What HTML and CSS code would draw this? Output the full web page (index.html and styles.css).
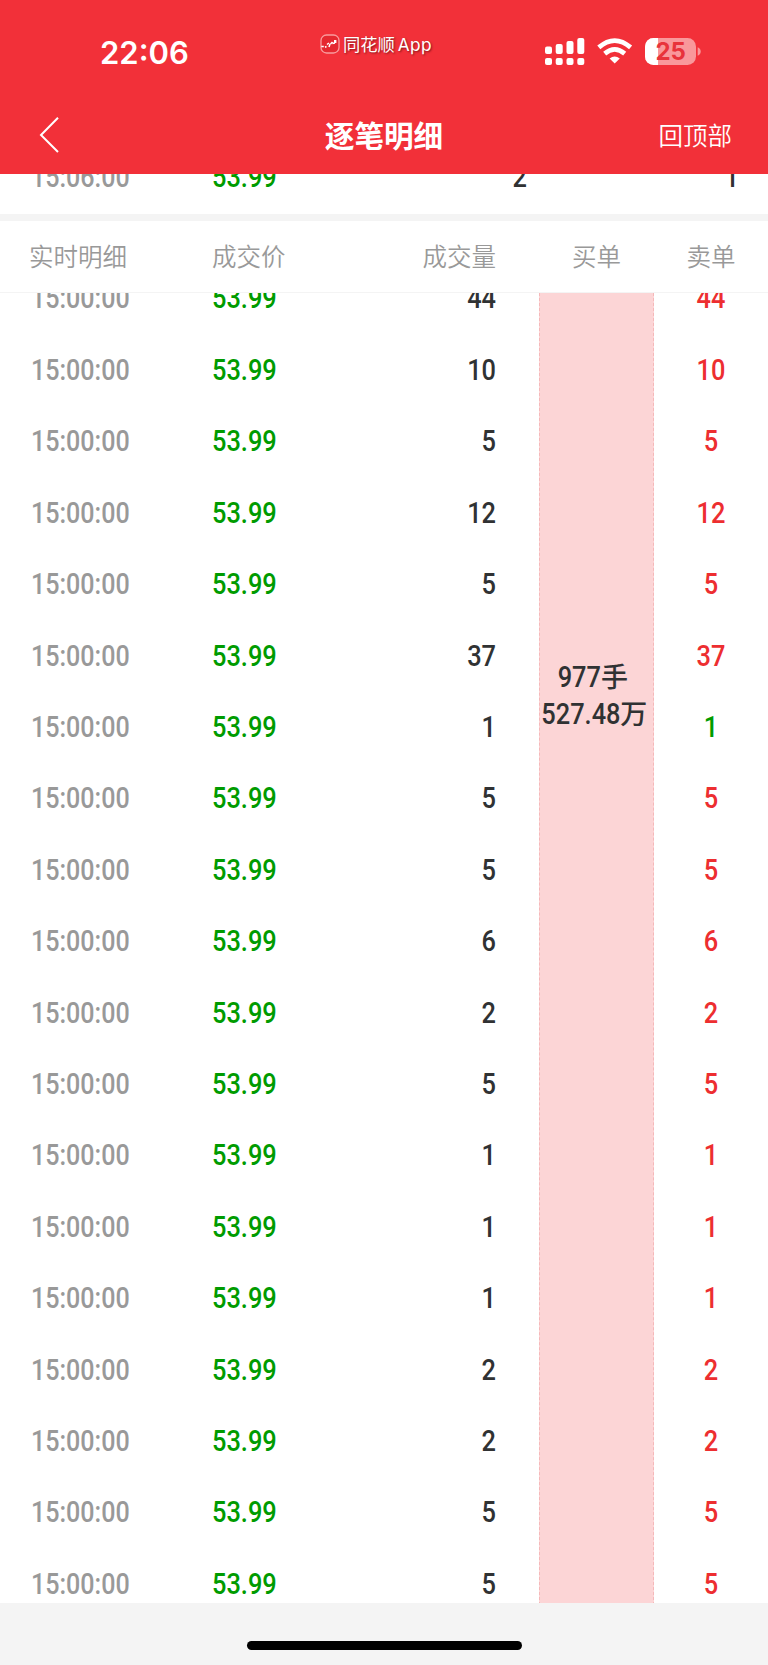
FILE: index.html
```
<!DOCTYPE html>
<html lang="zh-CN">
<head>
<meta charset="utf-8">
<title>逐笔明细</title>
<link rel="stylesheet" href="styles.css">
</head>
<body>
<div class="screen">
  <header class="header">
    <div class="status">
      <div class="clock">22:06</div>
      <div class="app">
        <svg class="app-icon" width="20" height="20" viewBox="0 0 20 20"><rect x="1" y="1" width="18" height="18" rx="5.5" fill="#e52830" stroke="#f99b9d" stroke-width="1.3"/><path d="M1.3 12.5h2.500M5 13.200l1.500-.7M7 10.500l2-1.500M9 13l1-3M10.500 10l2-2M12.500 9.500l2.500-.5" fill="none" stroke="#fff" stroke-width="1.5"/><rect x="14" y="6" width="2.4" height="3" fill="#fff"/></svg>
        <span class="app-name">同花顺<span class="app-latin">App</span></span>
      </div>
      <div class="indicators">
        <svg width="156" height="28" viewBox="0 0 156 28">
          <g fill="#fff">
            <rect x="0" y="8.5" width="7" height="7.5" rx="2"/><rect x="10.7" y="6" width="7" height="10" rx="2"/><rect x="21.5" y="3" width="7" height="13" rx="2"/><rect x="32.3" y="0" width="7" height="16" rx="2"/>
            <rect x="0" y="20" width="7" height="7" rx="2"/><rect x="10.7" y="20" width="7" height="7" rx="2"/><rect x="21.5" y="20" width="7" height="7" rx="2"/><rect x="32.3" y="20" width="7" height="7" rx="2"/>
            <path d="M69.7 25.6L64.6 20.6Q69.7 16.6 74.8 20.6Z"/>
          </g>
          <g fill="none" stroke="#fff" stroke-width="4.7"><path d="M53.8 9.4Q69.7-4.2 85.6 9.4"/><path d="M59.7 15.6Q69.7 7.2 79.7 15.6"/></g>
          <defs><clipPath id="cell"><rect x="100" y="0" width="51" height="27" rx="8.5"/></clipPath></defs>
          <g clip-path="url(#cell)"><rect x="100" width="51" height="27" fill="#f9989b"/><rect x="100" width="13" height="27" fill="#fff"/></g>
          <path d="M152.7 9.3Q155.7 10.5 155.7 13.5Q155.7 16.5 152.7 17.8Z" fill="#f9989b"/>
          <text class="charge" x="125.7" y="22.2" text-anchor="middle">25</text>
        </svg>
      </div>
    </div>
    <nav class="nav">
      <svg class="back" width="20" height="36" viewBox="0 0 20 36"><path d="M19 .7L2 18l17 17" fill="none" stroke="#fff" stroke-width="2"/></svg>
      <h1 class="title">逐笔明细</h1>
      <span class="to-top">回顶部</span>
    </nav>
  </header>

  <section class="summary">
    <div class="summary-row"><span class="num time">15:06:00</span><span class="num price">53.99</span><span class="num end">2</span><span class="num end">1</span></div>
  </section>

  <div class="heads"><span>实时明细</span><span>成交价</span><span class="head-end">成交量</span><span class="head-mid buy-head">买单</span><span class="head-mid">卖单</span></div>

  <main class="list">
    <div class="trades">
      <div class="row"><span class="num time">15:00:00</span><span class="num price">53.99</span><span class="num end">44</span></div>
      <div class="row"><span class="num time">15:00:00</span><span class="num price">53.99</span><span class="num end">10</span></div>
      <div class="row"><span class="num time">15:00:00</span><span class="num price">53.99</span><span class="num end">5</span></div>
      <div class="row"><span class="num time">15:00:00</span><span class="num price">53.99</span><span class="num end">12</span></div>
      <div class="row"><span class="num time">15:00:00</span><span class="num price">53.99</span><span class="num end">5</span></div>
      <div class="row"><span class="num time">15:00:00</span><span class="num price">53.99</span><span class="num end">37</span></div>
      <div class="row"><span class="num time">15:00:00</span><span class="num price">53.99</span><span class="num end">1</span></div>
      <div class="row"><span class="num time">15:00:00</span><span class="num price">53.99</span><span class="num end">5</span></div>
      <div class="row"><span class="num time">15:00:00</span><span class="num price">53.99</span><span class="num end">5</span></div>
      <div class="row"><span class="num time">15:00:00</span><span class="num price">53.99</span><span class="num end">6</span></div>
      <div class="row"><span class="num time">15:00:00</span><span class="num price">53.99</span><span class="num end">2</span></div>
      <div class="row"><span class="num time">15:00:00</span><span class="num price">53.99</span><span class="num end">5</span></div>
      <div class="row"><span class="num time">15:00:00</span><span class="num price">53.99</span><span class="num end">1</span></div>
      <div class="row"><span class="num time">15:00:00</span><span class="num price">53.99</span><span class="num end">1</span></div>
      <div class="row"><span class="num time">15:00:00</span><span class="num price">53.99</span><span class="num end">1</span></div>
      <div class="row"><span class="num time">15:00:00</span><span class="num price">53.99</span><span class="num end">2</span></div>
      <div class="row"><span class="num time">15:00:00</span><span class="num price">53.99</span><span class="num end">2</span></div>
      <div class="row"><span class="num time">15:00:00</span><span class="num price">53.99</span><span class="num end">5</span></div>
      <div class="row"><span class="num time">15:00:00</span><span class="num price">53.99</span><span class="num end">5</span></div>
    </div>
    <div class="buy">
      <div class="buy-line"><span class="num">977</span><span class="unit">手</span></div>
      <div class="buy-line"><span class="num">527.48</span><span class="unit">万</span></div>
    </div>
    <div class="sells">
      <div class="sell num">44</div><div class="sell num">10</div><div class="sell num">5</div><div class="sell num">12</div><div class="sell num">5</div><div class="sell num">37</div><div class="sell num down">1</div><div class="sell num">5</div><div class="sell num">5</div><div class="sell num">6</div><div class="sell num">2</div><div class="sell num">5</div><div class="sell num">1</div><div class="sell num">1</div><div class="sell num">1</div><div class="sell num">2</div><div class="sell num">2</div><div class="sell num">5</div><div class="sell num">5</div>
    </div>
  </main>
  <footer class="home"><div class="home-bar"></div></footer>
</div>
</body>
</html>
```
FILE: styles.css
```
* { box-sizing: border-box; }
body { margin: 0; background: #fff; color: #303233; font-family: "Noto Sans CJK SC", sans-serif; }
.screen { width: 768px; height: 1665px; display: flex; flex-direction: column; overflow: hidden; }

.header { height: 174.4px; flex: none; background: #f23039; color: #fff; }
.status { height: 97px; display: grid; grid-template-columns: 320px 225px 1fr; align-items: start; }
.clock { padding: 34px 0 0 100px; font: 600 31px/38px Inter, sans-serif; }
.app { display: flex; align-items: center; padding-top: 32px; height: 58px; }
.app-icon { flex: none; margin-bottom: 2px; }
.app-name { margin: -1px 0 0 3px; font-size: 17.3px; line-height: 24px; white-space: nowrap; text-shadow: 1px 1px 2px #82151a; }
.app-latin { font-family: Inter, sans-serif; margin-left: 3px; letter-spacing: .3px; }
.indicators { padding-top: 38px; }
.indicators svg { display: block; }
.charge { font: 700 24px Inter, sans-serif; fill: #e8333b; }
.nav { height: 76px; display: grid; grid-template-columns: 1fr auto 1fr; align-items: center; padding: 0 36px 0 39px; }
.title { margin: 0 3px 0 0; font-size: 29.6px; font-weight: 600; line-height: 40px; }
.to-top { justify-self: end; font-size: 24.5px; line-height: 36px; font-weight: 350; }

.num { font-family: Roboto, sans-serif; font-size: 28.7px; font-weight: 500; transform: scaleX(.885); transform-origin: left; white-space: nowrap; }
.time { color: #999; transform: scaleX(.875); padding-left: 1px; }
.price { color: #009b00; }
.end { text-align: right; transform-origin: right; }

.summary { height: 46.6px; flex: none; overflow: hidden; border-bottom: 7px solid #f4f4f4; }
.summary-row { height: 72px; margin-top: -33px; padding-left: 30px; display: grid; grid-template-columns: 182px 110px 205px 212px; align-items: center; line-height: 72px; }
.heads { height: 72px; flex: none; display: grid; grid-template-columns: 183px 110px 174px 158px 114px; padding: 0 0 2px 29px; align-items: center; border-bottom: 1px solid #f4f4f4; color: #999; font-size: 24.5px; font-weight: 350; }
.head-end { text-align: right; }
.head-mid { text-align: center; }
.buy-head { padding-left: 43px; }

.list { height: 1310px; flex: none; display: grid; grid-template-columns: 539px 115px 114px; overflow: hidden; }
.trades, .sells { margin-top: -29.5px; }
.row { height: 71.42px; padding-left: 30px; display: grid; grid-template-columns: 182px 110px 174px; align-items: center; line-height: 71.42px; }
.sell { height: 71.42px; line-height: 71.42px; text-align: center; transform-origin: center; color: #ed2e30; }
.sell.down { color: #009b00; }
.buy { background: #fcd5d6; border: dashed #f5b8b9; border-width: 0 1px; padding-top: 365px; }
.buy-line { height: 37.3px; display: flex; justify-content: center; align-items: center; margin: 0 0 0 -13px; white-space: nowrap; }
.buy-line:last-child { margin: 0 -2px 0 -17px; }
.buy-line .num { transform-origin: right; }
.unit { font-size: 27px; line-height: 37px; font-weight: 500; margin-top: -3px; }
.home { flex: 1; background: #f4f4f4; padding-top: 38px; }
.home-bar { width: 275px; height: 9px; margin: 0 auto; border-radius: 5px; background: #000; }
```
